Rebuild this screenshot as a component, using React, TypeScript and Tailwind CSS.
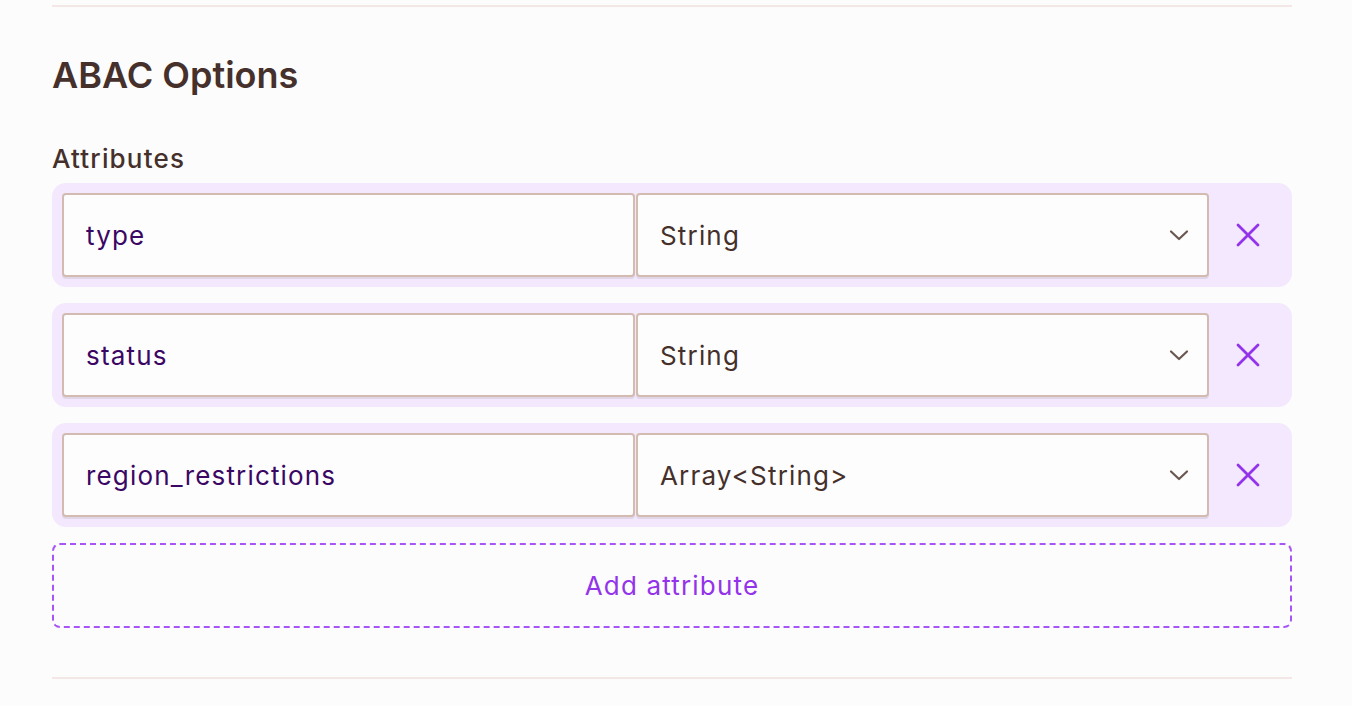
import React from "react";

const rows = [
  { name: "type", type: "String" },
  { name: "status", type: "String" },
  { name: "region_restrictions", type: "Array<String>" },
];

function Chevron() {
  return (
    <svg width="20" height="12" viewBox="0 0 20 12" fill="none" className="shrink-0">
      <path d="M2 2.5l8 7.5 8-7.5" stroke="#6b5750" strokeWidth="2.2" strokeLinecap="round" strokeLinejoin="round" />
    </svg>
  );
}

function XIcon() {
  return (
    <svg width="24" height="24" viewBox="0 0 24 24" fill="none">
      <path d="M2 2l20 20M22 2L2 22" stroke="#9333ea" strokeWidth="2.8" strokeLinecap="round" />
    </svg>
  );
}

export default function App() {
  return (
    <div className="min-h-screen w-full bg-[#fcfcfc] pl-[52px] pr-[60px] font-['Inter',sans-serif]">
      <div className="pt-[5px]">
        <div className="h-[2px] bg-[#f3e8e6]" />
      </div>
      <h2 className="mt-[47px] text-[36px] leading-[42px] font-semibold text-[#45302b]">ABAC Options</h2>
      <div className="mt-[48px] text-[26px] leading-[30px] font-medium tracking-[0.045em] text-[#45302b]">Attributes</div>
      <div className="mt-[9px] flex flex-col gap-[16px]">
        {rows.map((r) => (
          <div key={r.name} className="flex h-[104px] items-center rounded-[14px] bg-[#f3e8fd] pl-[10px]">
            <div className="grid h-[84px] flex-1 grid-cols-2 gap-[1px]">
              <div className="flex min-w-0 items-center rounded-[4px] border-2 border-[#d4bbb1] bg-[#fdfdfd] pl-[22px] text-[26px] tracking-[0.045em] text-[#3b0764] shadow-[0_2px_0_rgba(0,0,0,0.08)]">
                {r.name}
              </div>
              <div className="flex min-w-0 items-center justify-between rounded-[4px] border-2 border-[#d4bbb1] bg-[#fdfdfd] pl-[22px] pr-[18px] text-[26px] tracking-[0.045em] text-[#45302b] shadow-[0_2px_0_rgba(0,0,0,0.08)]">
                <span>{r.type}</span>
                <Chevron />
              </div>
            </div>
            <div className="flex w-[83px] shrink-0 items-center justify-center pr-[5px]">
              <XIcon />
            </div>
          </div>
        ))}
        <div className="flex h-[85px] items-center justify-center rounded-[8px] border-2 border-dashed border-[#a855f7] text-[26px] tracking-[0.045em] text-[#9333ea]">
          Add attribute
        </div>
      </div>
      <div className="mt-[49px] h-[2px] bg-[#f3e8e6]" />
    </div>
  );
}
